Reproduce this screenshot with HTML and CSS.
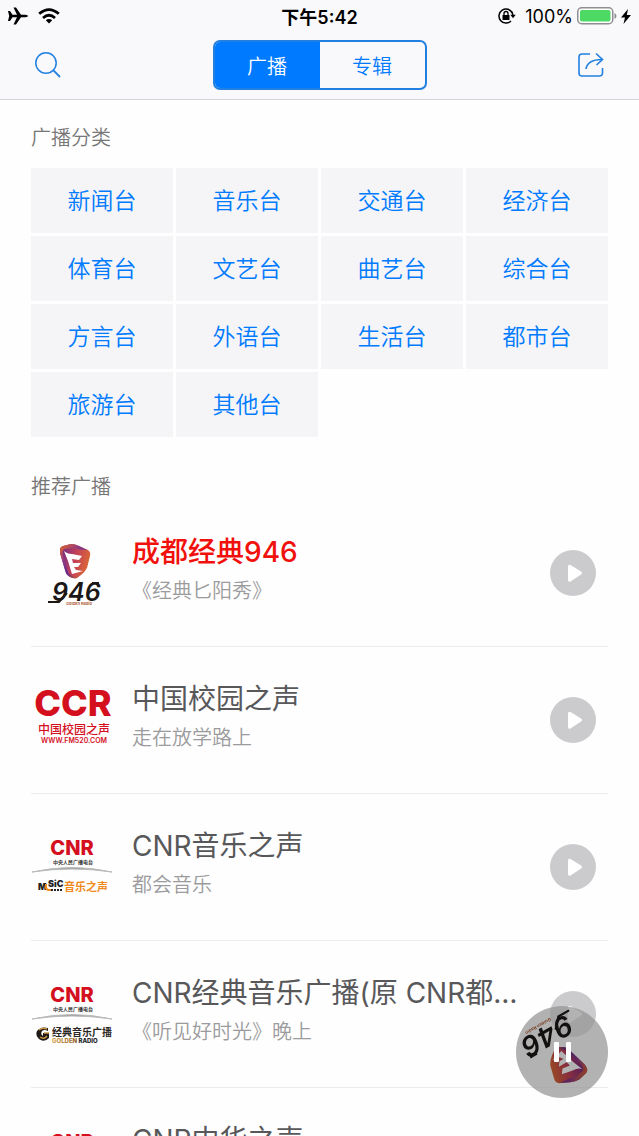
FILE: index.html
```html
<!DOCTYPE html>
<html lang="zh-CN">
<head>
  <meta charset="UTF-8" />
  <meta name="viewport" content="width=device-width, initial-scale=1" />
  <title>广播</title>
  <link rel="stylesheet" href="styles.css">
</head>
<body>

<svg class="defs" aria-hidden="true">
  <defs>
    <linearGradient id="shield" x1="0" y1="0.2" x2="1" y2="0.5">
      <stop offset="0" stop-color="#6a2a8c" />
      <stop offset="0.5" stop-color="#c2405a" />
      <stop offset="1" stop-color="#dc6a34" />
    </linearGradient>
    <linearGradient id="shield-edge" x1="0" y1="0" x2="0.7" y2="1">
      <stop offset="0" stop-color="#e8661c" />
      <stop offset="0.4" stop-color="#8a3a88" />
      <stop offset="0.7" stop-color="#5a2a90" />
      <stop offset="1" stop-color="#d8601c" />
    </linearGradient>
    <linearGradient id="gold" x1="0" y1="0" x2="1" y2="0">
      <stop offset="0" stop-color="#d9a04a" />
      <stop offset="0.55" stop-color="#8a5a20" />
      <stop offset="0.6" stop-color="#222" />
    </linearGradient>
    <symbol id="logo-946" viewBox="0 0 82 82">
      <path d="M29 18 Q29 15 32 14 L40 12 Q44 12 48 14 L57 18 Q60 20 59 24 L56 36 Q54 40 50 43 L46 46 Q43 47 39 45 Q35 43 34 38 L29 21 Z" fill="url(#shield)" />
      <path d="M29 18 Q29 15 32 14 L40 12 Q44 12 48 14 L56 18 Q50 18 42 16 L34 17 Q31 18 32 23 L37 41 Q40 44 46 46 Q43 47 39 45 Q35 43 34 38 L29 21 Z" fill="url(#shield-edge)" />
      <path d="M33 19 Q36 22 41 22 L51 24 L48 28 L41 27 L42 31 L50 31 L47 35 L43 35 L45 38 L52 39 L41 42 L37 29 Z" fill="#fff" />
      <text x="21" y="69" class="logo-946-num">946</text>
      <path d="M17 70 H28 L36 61" fill="none" stroke="#1c1817" stroke-width="2" />
      <path d="M61 51 H68" stroke="#1c1817" stroke-width="2" />
      <text x="35" y="73" class="logo-946-sub">Golden Radio</text>
    </symbol>
    <symbol id="logo-cnr" viewBox="0 0 82 82">
      <text x="41" y="29" class="logo-cnr-name">CNR</text>
      <text x="42" y="38" class="logo-cnr-sub">中央人民广播电台</text>
      <path d="M1 46 Q41 37 81 46 Q41 40 1 46 Z" fill="#999" stroke="#bbb" stroke-width="1" />
    </symbol>
    <symbol id="play" viewBox="0 0 46 46">
      <circle cx="23" cy="23" r="23" fill="#cbcbcd" />
      <path d="M18 16.500 Q18 14 20.500 15 L31 21.500 Q33 23 31 24.500 L20.500 31.500 Q18 32.500 18 30 Z" fill="#fff" />
    </symbol>
  </defs>
</svg>

<div class="app">
  <header class="header">
    <div class="status">
      <div class="status-left">
        <svg width="20" height="18" viewBox="0 0 20 18"><path d="M0 4 L2 4 L4.500 7.800 L9 7.800 L5.500 0.500 L8 0.500 L13 7.800 L17.500 7.800 Q20 8 20 9 Q20 10 17.500 10.200 L13 10.200 L8 17.500 L5.500 17.500 L9 10.200 L4.500 10.200 L2 14 L0 14 L1.200 9 Z" /></svg>
        <svg width="22" height="16" viewBox="0 0 22 16"><g fill="none" stroke="#000" stroke-width="2.800"><path d="M1.200 5.800 Q11 -2.600 20.800 5.800" /><path d="M5 10 Q11 4.600 17 10" /></g><path d="M7.800 12.300 Q11 9.800 14.200 12.300 L11 15.600 Z" /></svg>
      </div>
      <time class="status-time">下午5:42</time>
      <div class="status-right">
        <svg width="18" height="16" viewBox="0 0 18 16"><path d="M14.300 5 A7 7 0 1 0 13 13" fill="none" stroke="#000" stroke-width="1.500" /><path d="M13.500 3.500 A7 7 0 0 1 15 8" fill="none" stroke="#000" stroke-width="1.500" /><path d="M12.300 6.800 L17.700 6.800 L15 10.200 Z" /><rect x="4.500" y="7" width="7" height="5" rx="0.500" /><path d="M6 7 V5.500 A2 2 0 0 1 10 5.500 V7" fill="none" stroke="#000" stroke-width="1.300" /></svg>
        <span class="battery-level">100%</span>
        <svg width="40" height="18" viewBox="0 0 40 18"><rect x="0.750" y="0.750" width="35" height="16" rx="4" fill="#fff" stroke="#8e8e90" stroke-width="1.500" /><rect x="3" y="3" width="30.500" height="11.500" rx="2" fill="#4cd964" /><path d="M37.500 6 Q39.500 7 39.500 9 Q39.500 11 37.500 12 Z" fill="#8e8e90" /></svg>
        <svg width="10" height="15" viewBox="0 0 10 15"><path d="M7 0 L0 8.500 L4 8.500 L2.500 15 L10 6 L5.800 6 Z" /></svg>
      </div>
    </div>
    <nav class="nav">
      <button class="icon-button" type="button" aria-label="搜索">
        <svg width="26" height="26" viewBox="0 0 26 26"><g fill="none" stroke="#2280e0" stroke-width="1.500"><circle cx="11" cy="11" r="10.200" /><path d="M18.200 18.200 L25 25" stroke-width="1.800" /></g></svg>
      </button>
      <div class="segment">
        <button class="segment-item active" type="button">广播</button>
        <button class="segment-item" type="button">专辑</button>
      </div>
      <button class="icon-button share" type="button" aria-label="分享">
        <svg width="26" height="26" viewBox="0 0 26 26"><g fill="none" stroke="#2280e0" stroke-width="1.600"><path d="M12 2 H4 Q1 2 1 5 V21 Q1 24 4 24 H21 Q24.500 24 24.500 21 V16" /><path d="M8 17 Q9.500 7.500 24 7.500" /><path d="M18 1.500 L24.500 7.500 L18.500 13" /></g></svg>
      </button>
    </nav>
  </header>

  <main class="content">
    <section>
      <h2>广播分类</h2>
      <div class="categories">
        <a href="#">新闻台</a>
        <a href="#">音乐台</a>
        <a href="#">交通台</a>
        <a href="#">经济台</a>
        <a href="#">体育台</a>
        <a href="#">文艺台</a>
        <a href="#">曲艺台</a>
        <a href="#">综合台</a>
        <a href="#">方言台</a>
        <a href="#">外语台</a>
        <a href="#">生活台</a>
        <a href="#">都市台</a>
        <a href="#">旅游台</a>
        <a href="#">其他台</a>
      </div>
    </section>

    <section class="recommended">
      <h2>推荐广播</h2>
      <ul class="stations">
        <li class="station playing">
          <svg class="logo" viewBox="0 0 82 82"><use href="#logo-946" /></svg>
          <div class="info">
            <h3>成都经典946</h3>
            <p>《经典匕阳秀》</p>
          </div>
          <button class="play" type="button" aria-label="播放"><svg viewBox="0 0 46 46"><use href="#play" /></svg></button>
        </li>
        <li class="station">
          <svg class="logo" viewBox="0 0 82 82">
            <text x="42" y="37" class="logo-ccr-name">CCR</text>
            <text x="43" y="55" class="logo-ccr-cn">中国校园之声</text>
            <text x="43" y="64" class="logo-ccr-url">WWW.FM520.COM</text>
          </svg>
          <div class="info">
            <h3>中国校园之声</h3>
            <p>走在放学路上</p>
          </div>
          <button class="play" type="button" aria-label="播放"><svg viewBox="0 0 46 46"><use href="#play" /></svg></button>
        </li>
        <li class="station">
          <svg class="logo" viewBox="0 0 82 82">
            <use href="#logo-cnr" />
            <text x="7" y="64" class="logo-music">M</text>
            <path d="M15 58 V61 Q15 64 18 64 H20" fill="none" stroke="#f08a1c" stroke-width="2" />
            <text x="17" y="61" class="logo-music">SiC</text>
            <path d="M20 64 H31" stroke="#222" stroke-width="2" stroke-dasharray="2 1" />
            <text x="33" y="65" class="logo-music-cn">音乐之声</text>
          </svg>
          <div class="info">
            <h3>CNR音乐之声</h3>
            <p>都会音乐</p>
          </div>
          <button class="play" type="button" aria-label="播放"><svg viewBox="0 0 46 46"><use href="#play" /></svg></button>
        </li>
        <li class="station">
          <svg class="logo" viewBox="0 0 82 82">
            <use href="#logo-cnr" />
            <path d="M17 55 Q10 53 6 58 Q4 62 8 66 Q13 70 18 65 V60 H12 V63 Q9 61 11 58 Q13 56 17 58 Z" fill="#1f1a16" />
            <path d="M9 64 Q13 67 16 63 M13 60 H18 M8 57 Q11 54 16 56" fill="none" stroke="#c8964a" stroke-width="1.500" />
            <text x="21" y="63" class="logo-golden-cn">经典音乐广播</text>
            <text x="21" y="70" class="logo-golden-en" fill="url(#gold)">GOLDEN RADIO</text>
          </svg>
          <div class="info">
            <h3>CNR经典音乐广播(原 CNR都市之声)</h3>
            <p>《听见好时光》晚上</p>
          </div>
          <button class="play" type="button" aria-label="播放"><svg viewBox="0 0 46 46"><use href="#play" /></svg></button>
        </li>
        <li class="station">
          <svg class="logo" viewBox="0 0 82 82"><use href="#logo-cnr" /></svg>
          <div class="info">
            <h3>CNR中华之声</h3>
            <p>中华之声</p>
          </div>
          <button class="play" type="button" aria-label="播放"><svg viewBox="0 0 46 46"><use href="#play" /></svg></button>
        </li>
      </ul>
    </section>
  </main>

  <button class="player" type="button" aria-label="暂停">
    <svg viewBox="0 0 92 92">
      <circle cx="46" cy="46" r="46" fill="#fff" fill-opacity="0.6" />
      <g transform="rotate(150 46 46)"><use href="#logo-946" width="92" height="92" /></g>
      <circle cx="46" cy="46" r="46" fill="#000" fill-opacity="0.3" />
      <rect x="38" y="36" width="5" height="20" rx="1" fill="#fff" />
      <rect x="50" y="36" width="5" height="20" rx="1" fill="#fff" />
    </svg>
  </button>
</div>

</body>
</html>
```
FILE: styles.css
```css
* {
  box-sizing: border-box;
}
body {
  margin: 0;
  background-color: #fefefe;
  color: #58585a;
  font-family: Inter, "Noto Sans CJK SC", sans-serif;
}
h2, h3, p, ul {
  margin: 0;
  padding: 0;
  font-weight: 400;
}
button {
  border: 0;
  padding: 0;
  background: none;
  font: inherit;
  cursor: pointer;
}
svg {
  display: block;
}
.defs {
  position: absolute;
  width: 0;
  height: 0;
}
.app {
  display: flex;
  flex-direction: column;
  height: 100vh;
}

/* header */
.header {
  flex: none;
  background-color: #f9f8fb;
  border-bottom: 1px solid #d4d4d6;
}
.status {
  display: grid;
  grid-template-columns: 1fr auto 1fr;
  align-items: center;
  height: 32px;
  padding: 0 8px;
  color: #000;
}
.status-left {
  display: flex;
  align-items: center;
  gap: 10px;
}
.status-time {
  font-size: 18px;
  font-weight: 600;
}
.status-right {
  display: flex;
  align-items: center;
  justify-content: flex-end;
  gap: 4px;
}
.battery-level {
  padding-left: 5px;
  font-size: 18px;
}
.nav {
  display: grid;
  grid-template-columns: 1fr auto 1fr;
  align-items: center;
  padding: 8px 35px 9px;
}
.icon-button {
  justify-self: start;
}
.share {
  justify-self: end;
}
.segment {
  display: flex;
  height: 50px;
  border: 2px solid #2280e0;
  border-radius: 7px;
  overflow: hidden;
}
.segment-item {
  width: 105px;
  color: #007aff;
  font-size: 20px;
  font-weight: 350;
}
.segment-item.active {
  background-color: #007aff;
  color: #fff;
}

/* content */
.content {
  flex: 1;
  min-height: 0;
  padding: 0 31px;
  overflow-y: auto;
  scrollbar-width: none;
}
h2 {
  padding: 25px 0 17px;
  color: #777;
  font-size: 20px;
  font-weight: 350;
  line-height: 26px;
}
.categories {
  display: grid;
  grid-template-columns: repeat(4, 1fr);
  gap: 3px;
}
.categories a {
  padding-top: 2px;
  background-color: #f5f5f7;
  color: #007aff;
  font-size: 23px;
  font-weight: 350;
  line-height: 63px;
  text-align: center;
  text-decoration: none;
}
.recommended {
  margin-top: 12px;
}
.recommended h2 {
  padding-bottom: 0;
}
.stations {
  list-style: none;
}
.station {
  display: flex;
  align-items: center;
  height: 147px;
  padding-right: 12px;
  border-bottom: 1px solid #ececee;
}
.logo {
  flex: none;
  width: 82px;
  height: 82px;
  margin-right: 19px;
}
.info {
  flex: 1;
  min-width: 0;
  padding-bottom: 5px;
}
.info h3 {
  margin-right: 28px;
  font-size: 28px;
  line-height: 40px;
  white-space: nowrap;
  overflow: hidden;
  text-overflow: ellipsis;
}
.info p {
  color: #9b9b9d;
  font-size: 20px;
  font-weight: 350;
  line-height: 38px;
}
.playing h3 {
  color: #f0100c;
  font-weight: 500;
}
.play {
  flex: none;
  width: 46px;
  height: 46px;
}

/* station logos */
.logo-946-num {
  font-size: 25px;
  font-style: italic;
  font-weight: 600;
  fill: #1c1817;
}
.logo-946-sub {
  font-size: 4px;
  font-weight: 700;
  fill: #b0603a;
}
.logo-ccr-name, .logo-ccr-cn, .logo-ccr-url, .logo-cnr-name, .logo-cnr-sub {
  text-anchor: middle;
  fill: #d4101e;
}
.logo-ccr-name {
  font-size: 36px;
  font-weight: 800;
}
.logo-ccr-cn {
  font-size: 12px;
  font-weight: 500;
}
.logo-ccr-url {
  font-size: 7px;
  font-weight: 600;
}
.logo-cnr-name {
  font-size: 20px;
  font-weight: 800;
}
.logo-cnr-sub {
  font-size: 5px;
  font-weight: 700;
  fill: #333;
}
.logo-music {
  font-size: 9px;
  font-weight: 900;
  fill: #222;
}
.logo-music-cn {
  font-size: 11px;
  font-weight: 700;
  fill: #f08a1c;
}
.logo-golden-cn {
  font-size: 10px;
  font-weight: 700;
  fill: #2a2624;
}
.logo-golden-en {
  font-size: 6px;
  font-weight: 800;
}

/* floating player */
.player {
  position: fixed;
  right: 31px;
  bottom: 38px;
  width: 92px;
  height: 92px;
}
```
